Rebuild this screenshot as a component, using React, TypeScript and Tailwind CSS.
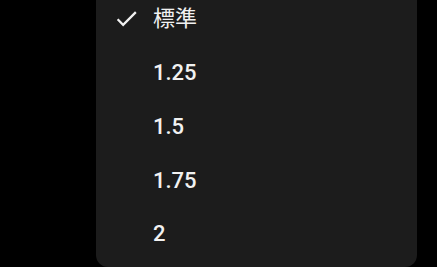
import { useState } from 'react';

const speeds = ['標準', '1.25', '1.5', '1.75', '2'];

export default function App() {
  const [selected, setSelected] = useState('標準');

  return (
    <div className="h-[267px] w-[437px] overflow-hidden bg-black">
      <div className="ml-[96px] h-[267px] w-[321px] overflow-hidden rounded-b-xl bg-[#1c1c1c]">
        <ul className="-mt-[8px]">
          {speeds.map((speed) => (
            <li key={speed}>
              <button
                type="button"
                onClick={() => setSelected(speed)}
                className="flex h-[53.75px] w-full items-center pl-[17px] text-left"
              >
                <span className="mr-[13px] flex h-[27px] w-[27px] shrink-0 items-center">
                  {selected === speed ? <CheckIcon /> : null}
                </span>
                <span
                  className={
                    speed === '標準'
                      ? 'text-[22px] font-normal text-[#f1f1f1]'
                      : 'text-[22px] font-medium text-[#f1f1f1]'
                  }
                  style={{ fontFamily: 'Roboto, "Noto Sans CJK JP", sans-serif' }}
                >
                  {speed}
                </span>
              </button>
            </li>
          ))}
        </ul>
      </div>
    </div>
  );
}

function CheckIcon() {
  return (
    <svg width="27" height="27" viewBox="0 0 24 24" fill="#f1f1f1">
      <path d="M9 16.17L4.83 12l-1.42 1.41L9 19 21 7l-1.41-1.41z" />
    </svg>
  );
}
